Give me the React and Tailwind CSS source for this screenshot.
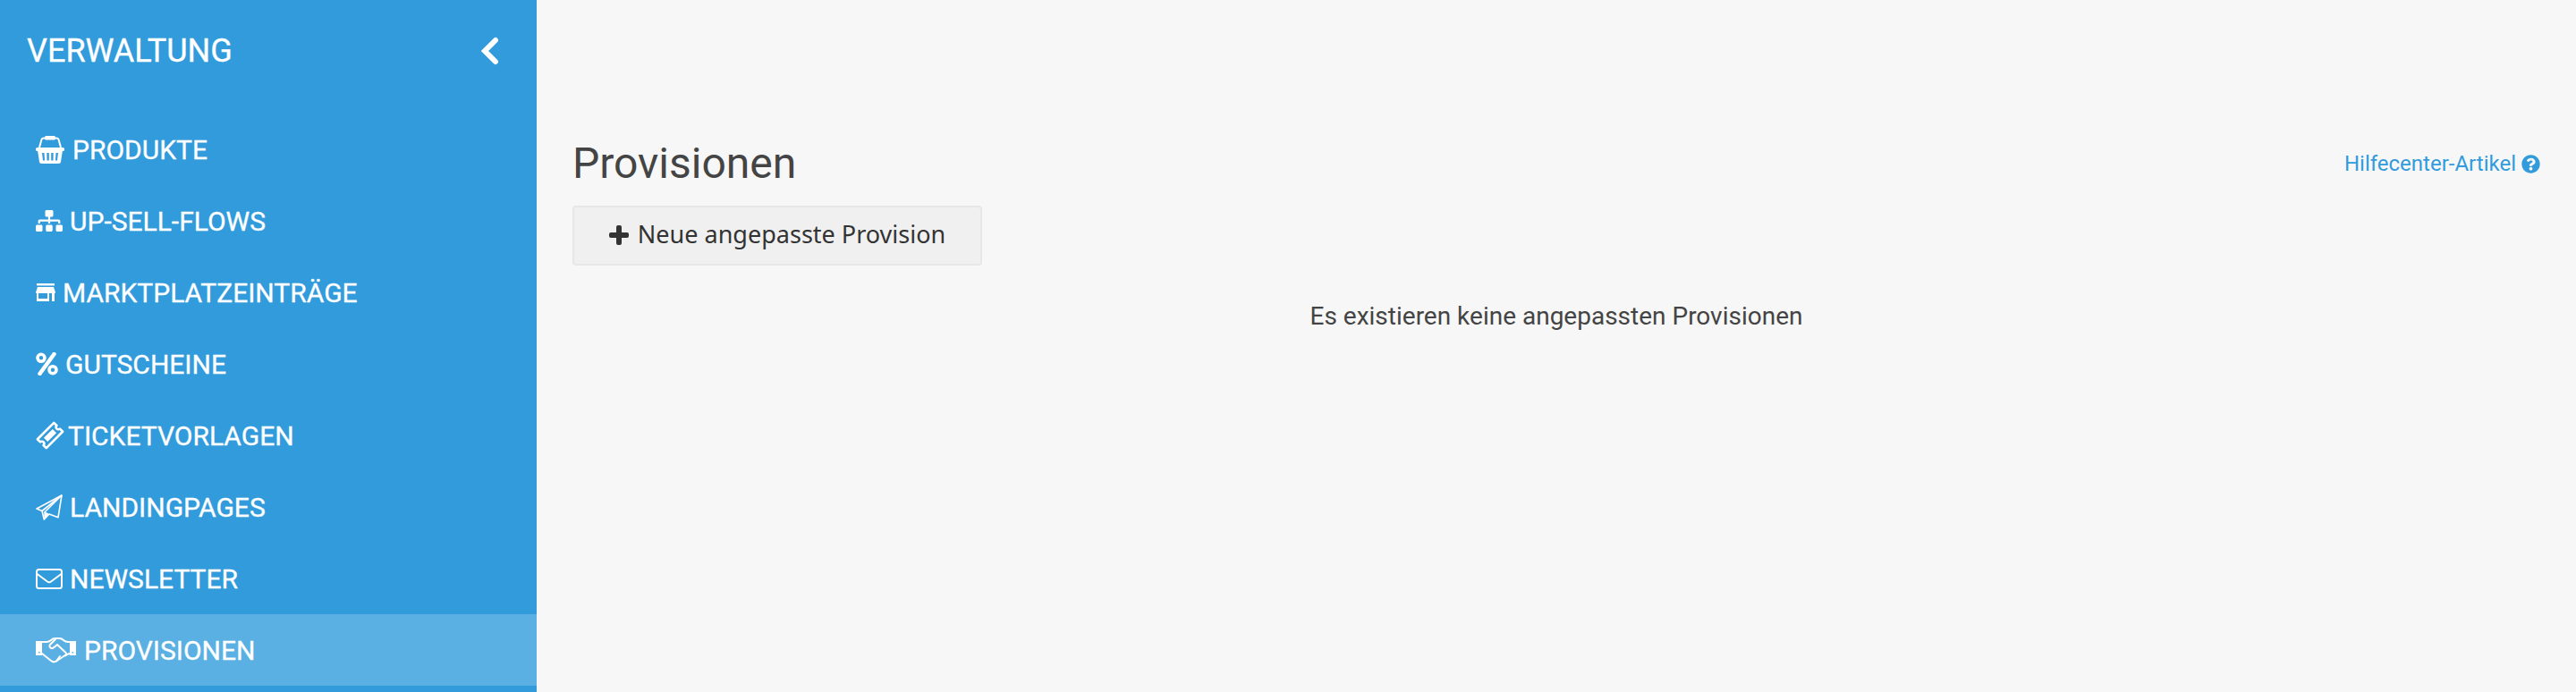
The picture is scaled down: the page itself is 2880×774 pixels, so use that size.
import { FaSitemap, FaQuestionCircle } from 'react-icons/fa';

function ChevronIcon({ className }) {
  return (
    <svg viewBox="0 0 21 32" className={className} fill="none" stroke="currentColor" strokeWidth="6" strokeLinecap="round" strokeLinejoin="miter">
      <path d="M17 4 L5 16 L17 28" />
    </svg>
  );
}

function PlusIcon({ className }) {
  return (
    <svg viewBox="0 0 22 22" className={className} fill="currentColor">
      <rect x="8" y="0" width="6" height="22" rx="2" />
      <rect x="0" y="8" width="22" height="6" rx="2" />
    </svg>
  );
}

function BasketIcon({ className }) {
  return (
    <svg viewBox="0 0 32 31" className={className} fill="none" stroke="currentColor">
      <path d="M4 13 L6.500 4 Q7 2.500 9 2.500 H23 Q25 2.500 25.500 4 L28 13" strokeWidth="2" />
      <rect x="10" y="0" width="12" height="4.500" rx="1.500" fill="currentColor" stroke="none" />
      <rect x="0" y="13" width="32" height="4" rx="1.500" fill="currentColor" stroke="none" />
      <path
        fill="currentColor"
        stroke="none"
        fillRule="evenodd"
        d="M2 16 L4 29 Q4.200 31 6.500 31 H25.500 Q27.800 31 28 29 L30 16 Z M7 19 H9.500 L10 27.500 H8 Z M12.300 19 H14.800 V27.500 H12.500 Z M17.200 19 H19.700 L19.500 27.500 H17.200 Z M22.500 19 H25 L24 27.500 H22 Z"
      />
    </svg>
  );
}

function StoreIcon({ className }) {
  return (
    <svg viewBox="0 0 22 20" className={className} fill="currentColor">
      <rect x="1" y="0" width="20" height="2.400" />
      <path d="M2 4 H20 L22 10 Q22 11 21 11 H1 Q0 11 0 10 Z" />
      <path fillRule="evenodd" d="M1 11 H3 V17 H13 V11 H15 V20 H1 Z M18 11 H21 V20 H18 Z" />
    </svg>
  );
}

function PercentIcon({ className }) {
  return (
    <svg viewBox="0 0 25 26" className={className} fill="none" stroke="currentColor">
      <circle cx="6" cy="6.300" r="4" strokeWidth="3.600" />
      <circle cx="19" cy="19.700" r="4" strokeWidth="3.600" />
      <path d="M20.500 2 L4.500 24" strokeWidth="4.500" strokeLinecap="round" />
    </svg>
  );
}

function TicketIcon({ className }) {
  return (
    <svg viewBox="-16 -16 32 32" className={className} fill="none" stroke="currentColor">
      <g transform="rotate(-45)">
        <path d="M-13 -7 H13 V-2.500 A2.500 2.500 0 0 0 13 2.500 V7 H-13 V2.500 A2.500 2.500 0 0 0 -13 -2.500 Z" strokeWidth="2.600" strokeLinejoin="round" />
        <rect x="-7" y="-3" width="14" height="6" fill="currentColor" stroke="none" />
      </g>
    </svg>
  );
}

function PlaneIcon({ className }) {
  return (
    <svg viewBox="0 0 30 29" className={className} fill="none" stroke="currentColor" strokeWidth="1.600" strokeLinejoin="round">
      <path d="M29 1 L1 16 L7 18.500 L9.300 28 L15 22 L25 25.700 Z" />
      <path d="M29 1 L7 18.500" />
      <path d="M29 1 L9.300 20.500" />
      <path d="M9.300 20.500 V28 L15 22 L11.500 20 Z" fill="currentColor" stroke="none" />
    </svg>
  );
}

function EnvelopeIcon({ className }) {
  return (
    <svg viewBox="0 0 30 23" className={className} fill="none" stroke="currentColor" strokeWidth="2" strokeLinejoin="round">
      <rect x="1" y="1" width="28" height="21" rx="2.500" />
      <path d="M1.500 6 L13 14.500 Q15 16 17 14.500 L28.500 6" />
    </svg>
  );
}

function HandshakeIcon({ className }) {
  return (
    <svg viewBox="0 0 45 29" className={className} fill="none" stroke="currentColor" strokeWidth="2" strokeLinejoin="round" strokeLinecap="round">
      <path fill="currentColor" stroke="none" fillRule="evenodd" d="M0 4 H7 V20 H0 Z M3 16 H4.500 V17.500 H3 Z M38 4 H45 V20 H38 Z M40.500 16 H42 V17.500 H40.500 Z" />
      <path d="M7 5 H12 Q15 5 17 3 Q19 1 22 1 H26 Q29 1 31 3 Q33 5 36 5 H38" />
      <path d="M7 18 L17 26 Q20 28.500 23 26.500 L33.500 19.500 L38 18" />
      <path d="M22 2 L16 8 Q14.500 10 16.500 11.500 Q18.500 13 20.500 11 L24 8 L33.500 17 Q35 19 33 20.500" />
      <path d="M27 21 L23 26.500" />
    </svg>
  );
}

const items = [
  { label: 'PRODUKTE', Icon: BasketIcon, size: 'w-[32px] h-[31px]', gap: 'ml-[9px]' },
  { label: 'UP-SELL-FLOWS', Icon: FaSitemap, size: 'w-[30px] h-[30px]', gap: 'ml-2' },
  { label: 'MARKTPLATZEINTRÄGE', Icon: StoreIcon, size: 'w-[22px] h-5', gap: 'ml-2' },
  { label: 'GUTSCHEINE', Icon: PercentIcon, size: 'w-[25px] h-[26px]', gap: 'ml-2' },
  { label: 'TICKETVORLAGEN', Icon: TicketIcon, size: 'w-8 h-8', gap: 'ml-1' },
  { label: 'LANDINGPAGES', Icon: PlaneIcon, size: 'w-[30px] h-[29px]', gap: 'ml-2' },
  { label: 'NEWSLETTER', Icon: EnvelopeIcon, size: 'w-[30px] h-[23px]', gap: 'ml-2' },
  { label: 'PROVISIONEN', Icon: HandshakeIcon, size: 'w-[45px] h-[29px]', gap: 'ml-[9px]', active: true },
];

export default function App() {
  return (
    <div className="flex h-screen overflow-hidden bg-[#f7f7f7] font-['Roboto',sans-serif]">
      <aside className="w-[600px] shrink-0 bg-[#329bdc] text-white">
        <div className="flex h-[113px] items-center justify-between pl-[30px] pr-[42px] [-webkit-text-stroke:0.3px_white]">
          <h2 className="text-[36px] leading-none">VERWALTUNG</h2>
          <ChevronIcon className="h-8 w-[21px]" />
        </div>
        <nav className="mt-[14px]">
          {items.map(({ label, Icon, size, gap, active }) => (
            <a key={label} className={`flex h-20 items-center pl-10 text-[30px] [-webkit-text-stroke:0.3px_white] ${active ? 'bg-[#5ab0e2]' : ''}`}>
              <Icon className={`${size} shrink-0`} />
              <span className={gap}>{label}</span>
            </a>
          ))}
        </nav>
      </aside>
      <main className="min-w-0 flex-1 pl-10 pr-10 pt-[153px]">
        <div className="flex items-start justify-between">
          <h1 className="text-[48px] leading-[60px] text-[#444444]">Provisionen</h1>
          <a className="mt-[15px] flex items-center gap-1.5 text-[24px] leading-[30px] text-[#329bdc]">
            Hilfecenter-Artikel
            <FaQuestionCircle className="h-[21px] w-[21px]" />
          </a>
        </div>
        <button className="mt-[17px] flex h-[67px] w-[458px] items-center justify-center gap-2.5 rounded border-2 border-[#e7e7e7] bg-[#f0f0f0] pb-0.5 text-[27px] text-[#333333] font-['Noto_Sans',sans-serif]">
          <PlusIcon className="h-[22px] w-[22px]" />
          Neue angepasste Provision
        </button>
        <p className="mt-[39px] text-center text-[28px] leading-[36px] text-[#444444]">
          Es existieren keine angepassten Provisionen
        </p>
      </main>
    </div>
  );
}
